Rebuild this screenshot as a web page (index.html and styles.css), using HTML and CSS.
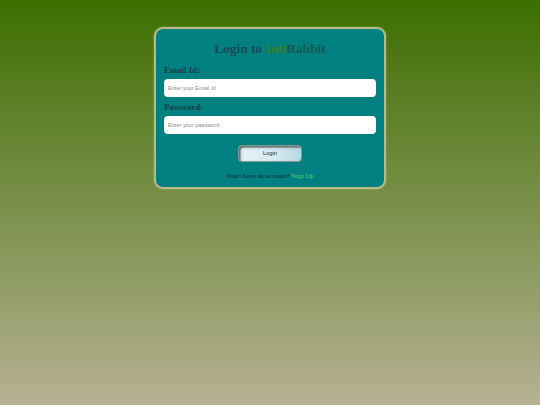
FILE: index.html
```html
<!DOCTYPE html>
<html lang="en">
<head>
  <meta charset="UTF-8">
  <meta name="viewport" content="width=device-width, initial-scale=1.0">
  <link rel="stylesheet" href="styles.css">
  <title>Login to InitRabbit</title>
</head>
<body>
  <div class="login-card">
    <h1 class="title">Login to <span class="brand-init">Init</span><span class="brand-rabbit">Rabbit</span></h1>
    <form class="login-form">
      <label class="field-label" for="email">Email Id:</label>
      <input class="field-input" id="email" type="text" placeholder="Enter your Email Id">
      <label class="field-label" for="password">Password:</label>
      <input class="field-input" id="password" type="password" placeholder="Enter your password">
      <button class="login-button" type="button">Login</button>
    </form>
    <p class="signup">Don't have an account? <a class="signup-link" href="#">Sign Up</a></p>
  </div>
</body>
</html>
```

FILE: styles.css
```css
* {
  box-sizing: border-box;
}

html {
  height: 100%;
}

body {
  display: flex;
  flex-direction: column;
  align-items: center;
  min-height: 100%;
  margin: 0;
  padding-top: 27px;
  background: linear-gradient(to bottom, #3c6e00, #b6b192);
  font-family: "Liberation Serif", serif;
}

.login-card {
  width: 232px;
  height: 162px;
  padding: 11px 8px 0;
  background-color: #008080;
  border: 2px solid #b4bc84;
  border-radius: 9px;
  box-shadow: 0 0 2px rgba(210, 215, 160, 0.6);
}

.title {
  margin: 0 0 7px;
  font-size: 13.4px;
  line-height: 17px;
  font-weight: bold;
  text-align: center;
  color: #1a4a55;
}

.brand-init {
  color: #38802a;
}

.brand-rabbit {
  color: #155a4c;
}

.login-form {
  display: flex;
  flex-direction: column;
}

.field-label {
  font-size: 8.8px;
  line-height: 12px;
  font-weight: bold;
  color: #15404a;
  margin-bottom: 3px;
}

.field-input {
  width: 100%;
  height: 18px;
  padding: 0 4px;
  background: #fff;
  border: 0;
  border-radius: 4px;
  font-family: "Liberation Sans", sans-serif;
  font-size: 5.6px;
}

.field-input + .field-label {
  margin-top: 3.5px;
}

.field-input::placeholder {
  color: #8a8a8a;
}

.login-button {
  align-self: center;
  width: 64px;
  height: 17px;
  margin-top: 11px;
  padding: 0;
  background: linear-gradient(to right, #e4f1f6, #d6e9f1 60%, #b4d8e6);
  border: 1.5px solid #8c9a92;
  border-radius: 4px;
  box-shadow: inset 1.5px 1.5px 2px #4f5f5c;
  font-family: "Liberation Sans", sans-serif;
  font-size: 5.8px;
  color: #222;
}

.signup {
  margin: 9px 0 0;
  font-size: 6.8px;
  line-height: 9px;
  text-align: center;
  color: #0b2b30;
}

.signup-link {
  color: #55d860;
  text-decoration: none;
}
```
